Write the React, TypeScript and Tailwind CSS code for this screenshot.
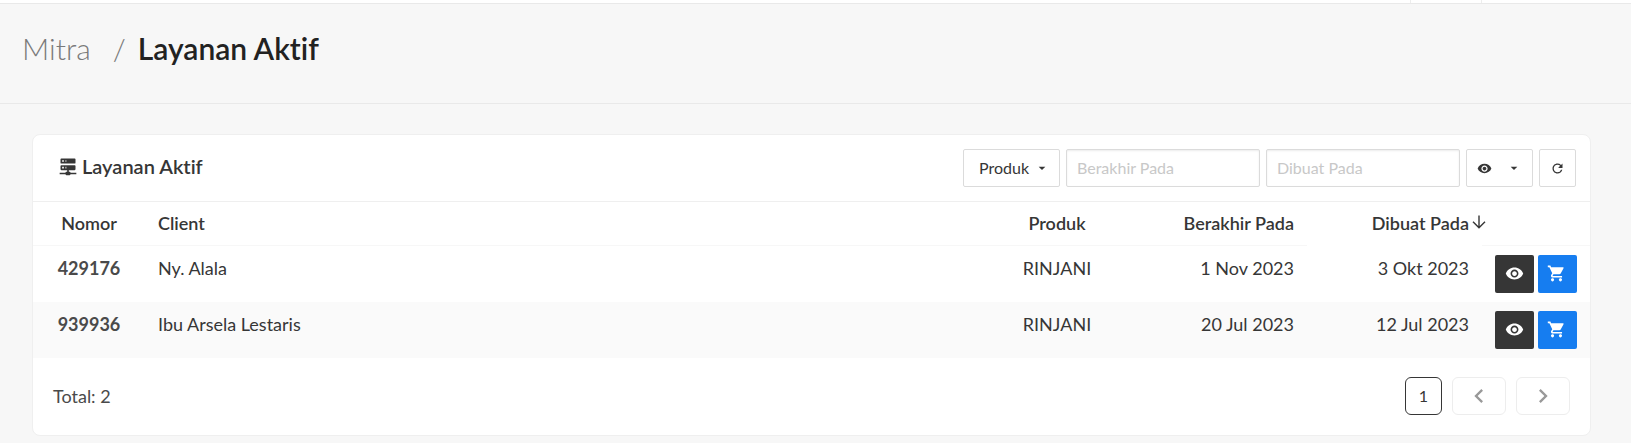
import clsx from "clsx";
import { useState } from "react";
import {
  MdArrowDropDown,
  MdChevronLeft,
  MdChevronRight,
  MdRefresh,
  MdRemoveRedEye,
  MdShoppingCart,
} from "react-icons/md";

const services = [
  { id: "429176", client: "Ny. Alala", product: "RINJANI", expires: "1 Nov 2023", created: "3 Okt 2023" },
  { id: "939936", client: "Ibu Arsela Lestaris", product: "RINJANI", expires: "20 Jul 2023", created: "12 Jul 2023" },
];

const ServerIcon = () => (
  <svg viewBox="0 0 24 24" className="h-5 w-5" fill="currentColor" aria-hidden="true">
    <path d="M13,19H14A1,1 0 0,1 15,20H22V22H15A1,1 0 0,1 14,23H10A1,1 0 0,1 9,22H2V20H9A1,1 0 0,1 10,19H11V17H4A1,1 0 0,1 3,16V12A1,1 0 0,1 4,11H20A1,1 0 0,1 21,12V16A1,1 0 0,1 20,17H13V19M4,3H20A1,1 0 0,1 21,4V8A1,1 0 0,1 20,9H4A1,1 0 0,1 3,8V4A1,1 0 0,1 4,3M9,7H10V5H9V7M9,15H10V13H9V15M5,5V7H7V5H5M5,13V15H7V13H5Z" />
  </svg>
);

const SortArrow = ({ up }: { up: boolean }) => (
  <svg
    viewBox="0 0 14 14"
    className={clsx("absolute left-full top-1 ml-[3px] h-3.5 w-3.5", up && "rotate-180")}
    fill="none"
    stroke="currentColor"
    strokeWidth="1.4"
    aria-hidden="true"
  >
    <path d="M7 0.5V12.5M1 6.8L7 12.8L13 6.8" />
  </svg>
);

export default function App() {
  const [expires, setExpires] = useState("");
  const [created, setCreated] = useState("");
  const [ascending, setAscending] = useState(false);

  const rows = ascending ? [...services].reverse() : services;

  return (
    <div className="min-h-screen bg-[#f7f7f7] font-['Lato','Noto_Sans',sans-serif] text-lg leading-6 text-[#363636] [font-variant-ligatures:none]">
      <nav className="flex h-1 justify-end border-b border-[#e9e9e9] bg-white">
        <div className="w-[72px] border-x border-[#ededed]" />
        <div className="w-[149px]" />
      </nav>

      <header className="border-b border-[#e9e9e9] px-[22px] pt-[22px] pb-8">
        <h1 className="flex text-3xl leading-[45px] text-[#222]">
          <a href="#mitra" className="font-light text-[#7a7a7a]">Mitra</a>
          <span className="pr-3 pl-[22px] font-light text-[#7a7a7a]">/</span>
          <span className="font-semibold">Layanan Aktif</span>
        </h1>
      </header>

      <main className="pt-[30px] pr-10 pb-2 pl-8">
        <section className="rounded-lg border border-[#efefef] bg-white">
          <div className="flex items-center justify-between border-b border-[#efefef] py-3.5 pr-3.5 pl-[25px]">
            <h2 className="flex items-center gap-1 pb-1 text-xl leading-6 font-semibold">
              <ServerIcon />
              Layanan Aktif
            </h2>

            <div className="flex gap-1.5 text-base">
              <div className="relative">
                <select aria-label="Produk" className="h-[38px] w-[97px] appearance-none rounded-xs border border-[#dbdbdb] bg-white pl-[15px]">
                  <option>Produk</option>
                  <option>RINJANI</option>
                </select>
                <MdArrowDropDown size={16} className="pointer-events-none absolute top-[11px] right-2.5" />
              </div>
              <input
                aria-label="Berakhir Pada"
                placeholder="Berakhir Pada"
                value={expires}
                onChange={(e) => setExpires(e.target.value)}
                className="h-[38px] w-[194px] rounded-xs border border-[#dbdbdb] px-2.5 pb-0.5 shadow-[inset_0_1px_2px_rgba(10,10,10,0.08)] placeholder:text-[#c8c8c8]"
              />
              <input
                aria-label="Dibuat Pada"
                placeholder="Dibuat Pada"
                value={created}
                onChange={(e) => setCreated(e.target.value)}
                className="h-[38px] w-[194px] rounded-xs border border-[#dbdbdb] px-2.5 pb-0.5 shadow-[inset_0_1px_2px_rgba(10,10,10,0.08)] placeholder:text-[#c8c8c8]"
              />
              <button aria-label="Kolom" aria-haspopup="menu" className="flex h-[38px] w-[67px] items-center justify-between rounded-xs border border-[#dbdbdb] px-2.5">
                <MdRemoveRedEye size={15} />
                <MdArrowDropDown size={16} />
              </button>
              <button aria-label="Muat ulang" className="flex h-[38px] w-[37px] items-center justify-center rounded-xs border border-[#dbdbdb]">
                <MdRefresh size={15} />
              </button>
            </div>
          </div>

          <table className="w-full table-fixed border-separate border-spacing-0">
            <thead>
              <tr className="h-11 align-top">
                <th className="w-28 border-b border-[#f7f7f7] px-[13px] pt-[9px] font-semibold">Nomor</th>
                <th className="border-b border-[#f7f7f7] px-[13px] pt-[9px] text-left font-semibold">Client</th>
                <th className="w-[150px] border-b border-[#f7f7f7] px-[13px] pt-[9px] font-semibold">Produk</th>
                <th className="w-[175px] border-b border-[#f7f7f7] px-[13px] pt-[9px] text-right font-semibold">Berakhir Pada</th>
                <th className="w-[175px] px-[13px] pt-[9px] text-right font-semibold" aria-sort={ascending ? "ascending" : "descending"}>
                  <button className="relative cursor-pointer" onClick={() => setAscending((prev) => !prev)}>
                    Dibuat Pada
                    <SortArrow up={ascending} />
                  </button>
                </th>
                <td className="w-[108px] border-b border-[#f7f7f7]" />
              </tr>
            </thead>
            <tbody>
              {rows.map((row) => (
                <tr key={row.id} className="h-14 align-top even:bg-[#fafafa]">
                  <td className="px-[13px] pt-2.5 text-center font-bold text-[#4a4a4a]">{row.id}</td>
                  <td className="px-[13px] pt-2.5">{row.client}</td>
                  <td className="px-[13px] pt-2.5 text-center">{row.product}</td>
                  <td className="px-[13px] pt-2.5 text-right">{row.expires}</td>
                  <td className="px-[13px] pt-2.5 text-right">{row.created}</td>
                  <td className="px-[13px] pt-[9px]">
                    <div className="flex gap-1 text-white">
                      <button aria-label={`Lihat ${row.id}`} className="flex h-[38px] w-[39px] items-center justify-center rounded-xs bg-[#363636] pb-0.5">
                        <MdRemoveRedEye size={19} />
                      </button>
                      <button aria-label={`Beli ${row.id}`} className="flex h-[38px] w-[39px] items-center justify-center rounded-xs bg-[#167df0] pr-0.5 pb-0.5">
                        <MdShoppingCart size={19} />
                      </button>
                    </div>
                  </td>
                </tr>
              ))}
            </tbody>
          </table>

          <footer className="flex items-center justify-between pt-[19px] pr-5 pb-5 pl-5 text-[#4a4a4a]">
            <p>Total: {services.length}</p>
            <nav className="flex gap-2.5" aria-label="Halaman">
              <button aria-current="page" className="h-[38px] w-[37px] rounded-md border border-[#363636] text-base text-[#363636]">1</button>
              <button aria-label="Sebelumnya" disabled className="flex h-[38px] w-[54px] items-center justify-center rounded-md border border-[#ededed] text-[#999]">
                <MdChevronLeft size={28} />
              </button>
              <button aria-label="Berikutnya" disabled className="flex h-[38px] w-[54px] items-center justify-center rounded-md border border-[#ededed] text-[#999]">
                <MdChevronRight size={28} />
              </button>
            </nav>
          </footer>
        </section>
      </main>
    </div>
  );
}
